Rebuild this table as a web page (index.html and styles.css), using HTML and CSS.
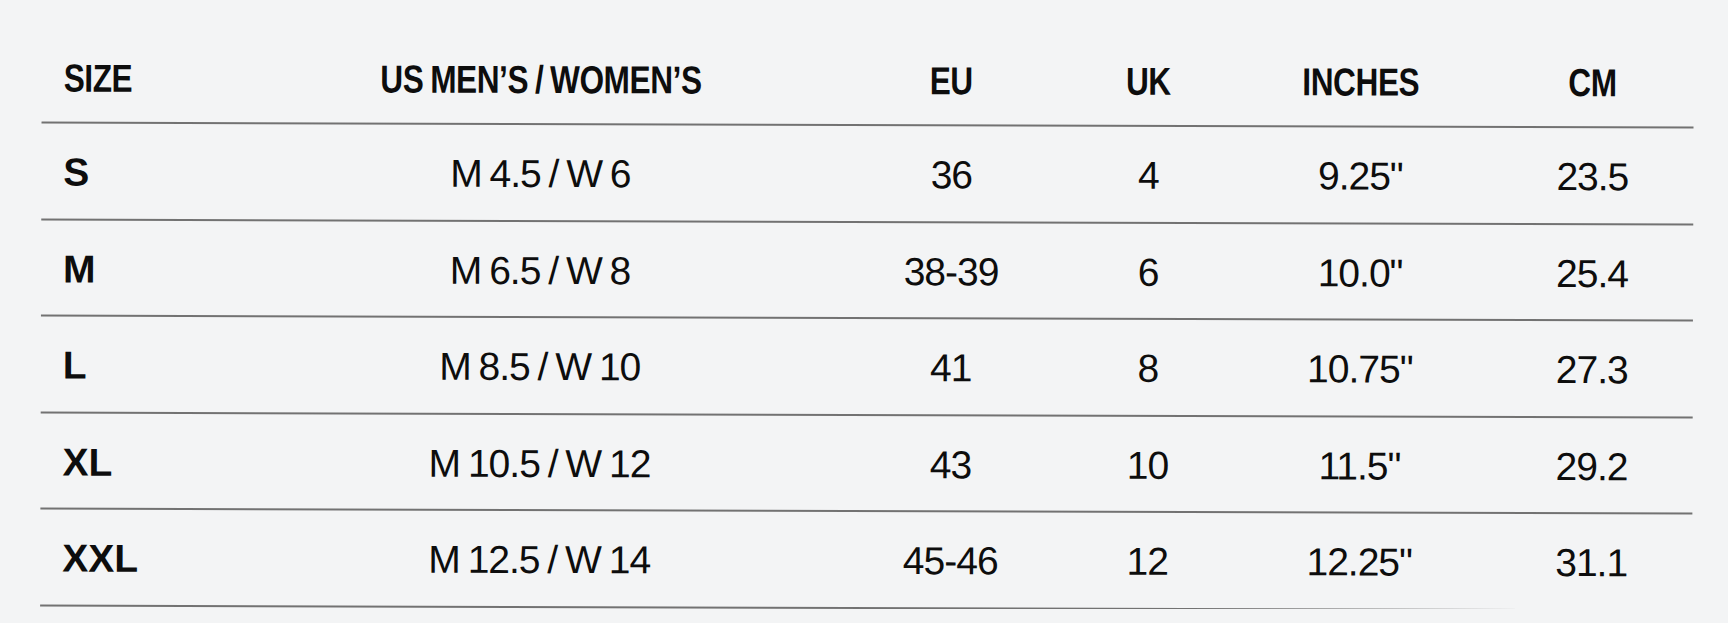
FILE: index.html
```html
<!DOCTYPE html>
<html lang="en">
<head>
<meta charset="utf-8">
<title>Size Chart</title>
<link rel="stylesheet" href="styles.css">
</head>
<body>
<div class="chart">
  <div class="row head">
    <div class="cell size"><span class="hd">SIZE</span></div>
    <div class="cell"><span class="hd">US MEN’S / WOMEN’S</span></div>
    <div class="cell"><span class="hd">EU</span></div>
    <div class="cell"><span class="hd">UK</span></div>
    <div class="cell"><span class="hd">INCHES</span></div>
    <div class="cell"><span class="hd">CM</span></div>
  </div>
  <div class="row">
    <div class="cell size">S</div>
    <div class="cell">M 4.5 / W 6</div>
    <div class="cell">36</div>
    <div class="cell">4</div>
    <div class="cell">9.25"</div>
    <div class="cell">23.5</div>
  </div>
  <div class="row">
    <div class="cell size">M</div>
    <div class="cell">M 6.5 / W 8</div>
    <div class="cell">38-39</div>
    <div class="cell">6</div>
    <div class="cell">10.0"</div>
    <div class="cell">25.4</div>
  </div>
  <div class="row">
    <div class="cell size">L</div>
    <div class="cell">M 8.5 / W 10</div>
    <div class="cell">41</div>
    <div class="cell">8</div>
    <div class="cell">10.75"</div>
    <div class="cell">27.3</div>
  </div>
  <div class="row">
    <div class="cell size">XL</div>
    <div class="cell">M 10.5 / W 12</div>
    <div class="cell">43</div>
    <div class="cell">10</div>
    <div class="cell">11.5"</div>
    <div class="cell">29.2</div>
  </div>
  <div class="row">
    <div class="cell size">XXL</div>
    <div class="cell">M 12.5 / W 14</div>
    <div class="cell">45-46</div>
    <div class="cell">12</div>
    <div class="cell">12.25"</div>
    <div class="cell">31.1</div>
  </div>
</div>
</body>
</html>
```

FILE: styles.css
```css
html, body {
  margin: 0;
  padding: 0;
  background: #f3f4f5;
}

body {
  color: #0d0d0d;
  font-family: "Liberation Sans", Arial, sans-serif;
  overflow: hidden;
}

.chart {
  width: 1652px;
  margin-left: 41px;
  transform: rotate(0.17deg);
  transform-origin: 50% 50%;
}

.row {
  display: grid;
  grid-template-columns: 204px 590px 232px 162px 262px 202px;
  align-items: center;
  height: 91.5px;
  padding-top: 3px;
  box-sizing: content-box;
  border-bottom: 2px solid #727272;
  font-size: 39px;
  line-height: 1;
  letter-spacing: -1px;
  word-spacing: -2px;
}

.row.head {
  height: 88px;
  padding-top: 36px;
  font-weight: 700;
  font-size: 39px;
  letter-spacing: -0.5px;
  word-spacing: -2px;
}

.cell {
  text-align: center;
  white-space: nowrap;
}

.cell.size {
  text-align: left;
  padding-left: 22px;
}

.hd {
  display: inline-block;
  transform: scaleX(0.81);
  transform-origin: 50% 50%;
}

.cell.size .hd {
  transform-origin: 0 50%;
}

.row:not(.head) .cell.size {
  font-weight: 700;
  letter-spacing: 0;
}
```
